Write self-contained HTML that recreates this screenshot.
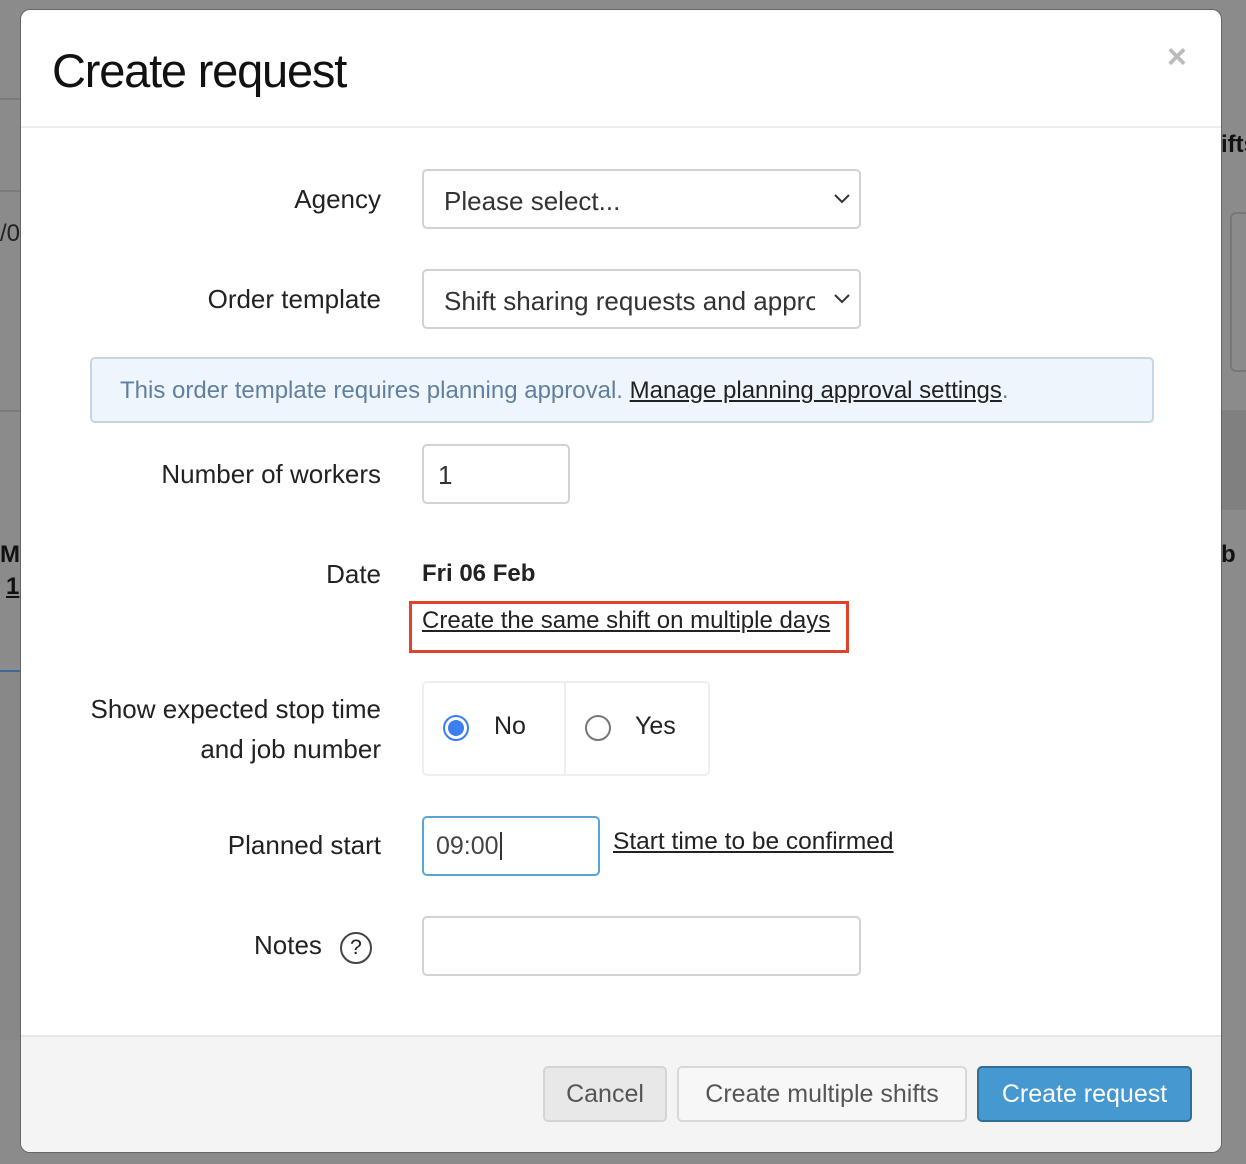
<!DOCTYPE html>
<html><head><style>
*{box-sizing:border-box;margin:0;padding:0}
body{width:1246px;height:1164px;background:#8b8b8b;font-family:"Liberation Sans",Arial,sans-serif;position:relative;overflow:hidden;color:#222}
.a{position:absolute}
.m{left:20px;top:9px;width:1202px;height:1144px;background:#fff;border-radius:10px;border:1px solid #666;overflow:hidden}
.lbl{font-size:26px;color:#222;text-align:right;width:380px;left:0}
.inp{border:2px solid #d2d2d2;border-radius:5px;background:#fff;font-size:26px;color:#333}
.btn{border-radius:5px;font-size:25px;text-align:center;line-height:52px}
</style></head><body>
<div class="a" style="left:0;top:98px;width:21px;height:2px;background:#7a7a7a"></div>
<div class="a" style="left:0;top:190px;width:21px;height:2px;background:#7a7a7a"></div>
<div class="a" style="left:0;top:410px;width:21px;height:2px;background:#7a7a7a"></div>
<div class="a" style="left:0;top:220px;font-size:24px;color:#222">/0</div>
<div class="a" style="left:0;top:541px;font-size:24px;font-weight:bold;color:#111">M</div>
<div class="a" style="left:6px;top:573px;font-size:24px;font-weight:bold;color:#111;text-decoration:underline">1</div>
<div class="a" style="left:0;top:670px;width:21px;height:370px;background:#888;border-top:2px solid #3a6a96"></div>
<div class="a" style="left:1221px;top:410px;width:25px;height:100px;background:#808080"></div>
<div class="a" style="left:1221px;top:131px;font-size:24px;font-weight:bold;color:#111">ifts</div>
<div class="a" style="left:1221px;top:541px;font-size:24px;font-weight:bold;color:#111">b</div>
<div class="a" style="left:1230px;top:212px;width:30px;height:160px;border:2px solid #777;border-radius:6px"></div>

<div class="a m">
 <div class="a" style="left:31px;top:33px;font-size:47px;color:#111;letter-spacing:-1.2px">Create request</div>
 <div class="a" style="left:1146px;top:28px;font-size:34px;color:#bbb;font-weight:bold">×</div>
 <div class="a" style="left:0;top:116px;width:1202px;height:2px;background:#ececec"></div>

 <div class="a lbl" style="top:174px;left:-20px">Agency</div>
 <div class="a inp" style="left:401px;top:159px;width:439px;height:60px;padding:15px 20px">Please select...
  <svg class="a" style="right:8px;top:22px" width="18" height="12"><path d="M2 2l7 7 7-7" stroke="#333" stroke-width="2" fill="none"/></svg></div>

 <div class="a lbl" style="top:274px;left:-20px">Order template</div>
 <div class="a inp" style="left:401px;top:259px;width:439px;height:60px;padding:15px 20px;white-space:nowrap;overflow:hidden">Shift sharing requests and approval
  <div class="a" style="right:0;top:0;width:44px;height:56px;background:#fff"></div>
  <svg class="a" style="right:8px;top:22px" width="18" height="12"><path d="M2 2l7 7 7-7" stroke="#333" stroke-width="2" fill="none"/></svg></div>

 <div class="a" style="left:69px;top:347px;width:1064px;height:66px;background:#eef5fc;border:2px solid #c3d6e7;border-radius:5px;padding:18px 28px;font-size:24px;color:#6180a0;white-space:nowrap">This order template requires planning approval. <span style="color:#222;text-decoration:underline">Manage planning approval settings</span>.</div>

 <div class="a lbl" style="top:449px;left:-20px">Number of workers</div>
 <div class="a inp" style="left:401px;top:434px;width:148px;height:60px;padding:14px 14px">1</div>

 <div class="a lbl" style="top:549px;left:-20px">Date</div>
 <div class="a" style="left:401px;top:550px;font-size:24px;font-weight:bold;color:#222">Fri 06 Feb</div>
 <div class="a" style="left:388px;top:591px;width:440px;height:52px;border:3px solid #e0432d"></div>
 <div class="a" style="left:401px;top:597px;font-size:24px;text-decoration:underline;color:#222">Create the same shift on multiple days</div>

 <div class="a lbl" style="top:679px;left:-20px;line-height:40px">Show expected stop time<br>and job number</div>
 <div class="a" style="left:401px;top:671px;width:288px;height:95px;border:2px solid #eee;border-radius:5px"></div>
 <div class="a" style="left:543px;top:671px;width:2px;height:95px;background:#eee"></div>
 <div class="a" style="left:422px;top:705px;width:26px;height:26px;border-radius:50%;border:2px solid #3b7ef0;padding:3px"><div style="width:16px;height:16px;border-radius:50%;background:#3b7ef0"></div></div>
 <div class="a" style="left:473px;top:702px;font-size:25px">No</div>
 <div class="a" style="left:564px;top:705px;width:26px;height:26px;border-radius:50%;border:2px solid #777"></div>
 <div class="a" style="left:614px;top:702px;font-size:25px">Yes</div>

 <div class="a lbl" style="top:820px;left:-20px">Planned start</div>
 <div class="a inp" style="left:401px;top:806px;width:178px;height:60px;padding:14px 12px;border-color:#5aa5d8;color:#444;font-size:25px">09:00<span style="border-left:2px solid #333;margin-left:1px"></span></div>
 <div class="a" style="left:592px;top:818px;font-size:24.5px;text-decoration:underline;color:#222">Start time to be confirmed</div>

 <div class="a" style="left:233px;top:920px;font-size:26px">Notes</div>
 <div class="a" style="left:319px;top:922px;width:32px;height:32px;border:2px solid #444;border-radius:50%;text-align:center;font-size:21px;line-height:28px">?</div>
 <div class="a inp" style="left:401px;top:906px;width:439px;height:60px"></div>

 <div class="a" style="left:0;top:1025px;width:1202px;height:120px;background:#f4f4f4;border-top:2px solid #e6e6e6"></div>
 <div class="a btn" style="left:522px;top:1056px;width:124px;height:56px;background:#e8e8e8;border:2px solid #d4d4d4;color:#555">Cancel</div>
 <div class="a btn" style="left:656px;top:1056px;width:290px;height:56px;background:#f7f7f7;border:2px solid #d8d8d8;color:#555">Create multiple shifts</div>
 <div class="a btn" style="left:956px;top:1056px;width:215px;height:56px;background:#4598d0;border:2px solid #2f6f98;color:#fff">Create request</div>
</div>
</body></html>
